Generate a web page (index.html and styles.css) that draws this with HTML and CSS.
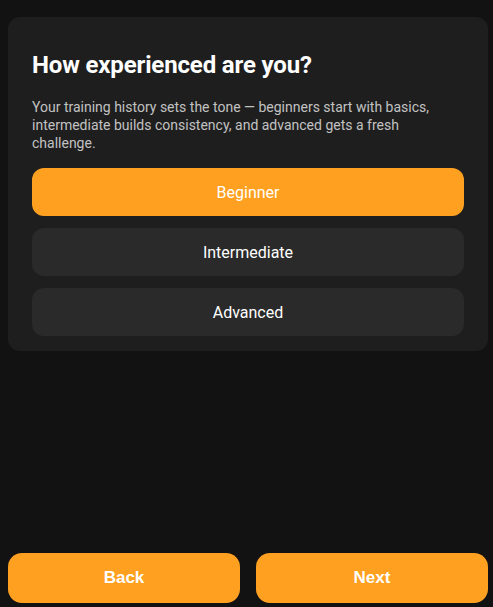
FILE: index.html
```html
<!DOCTYPE html>
<html>
<head>
    <meta charset="utf-8">
    <title>Experience</title>
    <meta name="viewport" content="width=device-width">
    <link rel="stylesheet" href="styles.css">
</head>
<body>
    <div class="page">
        <div class="card">
            <h2 class="title">How experienced are you?</h2>
            <p class="desc">Your training history sets the tone — beginners start with basics, intermediate builds consistency, and advanced gets a fresh challenge.</p>

            <div class="options">
                <button type="button" class="option active">Beginner</button>
                <button type="button" class="option">Intermediate</button>
                <button type="button" class="option">Advanced</button>
            </div>
        </div>

        <div class="footer">
            <button type="button" class="nav-btn">Back</button>
            <button type="button" class="nav-btn">Next</button>
        </div>
    </div>
</body>
</html>
```

FILE: styles.css
```css
html,
body {
    margin: 0;
    height: 100%;
    background: #121212;
}
.page {
    box-sizing: border-box;
    min-height: 100%;
    width: 480px;
    margin-left: 8px;
    padding: 17px 0 4px 0;
    display: flex;
    flex-direction: column;
    font-family: Roboto, "Liberation Sans", sans-serif;
}
.card {
    background: #1e1e1e;
    border-radius: 12px;
    padding: 24px 24px 15px;
}
.title {
    margin: 10px 0 0;
    color: #fff;
    font-size: 24px;
    font-weight: 700;
    line-height: 29px;
    letter-spacing: -0.15px;
}
.desc {
    margin: 18px 0 16px;
    color: #c2c2c2;
    font-size: 14px;
    line-height: 18px;
}
.options {
    display: flex;
    flex-direction: column;
    gap: 12px;
}
.option {
    height: 48px;
    border: 0;
    border-radius: 12px;
    background: #2a2a2a;
    color: #fff;
    font-family: Roboto, "Liberation Sans", sans-serif;
    font-size: 16px;
    cursor: pointer;
}
.option.active {
    background: #ffa020;
}
.footer {
    margin-top: auto;
    display: grid;
    grid-template-columns: 1fr 1fr;
    gap: 16px;
}
.nav-btn {
    height: 50px;
    border: 0;
    border-radius: 14px;
    background: #ffa020;
    color: #fff;
    font-family: "Liberation Sans", Arial, sans-serif;
    font-size: 17px;
    font-weight: 700;
    cursor: pointer;
}
```
